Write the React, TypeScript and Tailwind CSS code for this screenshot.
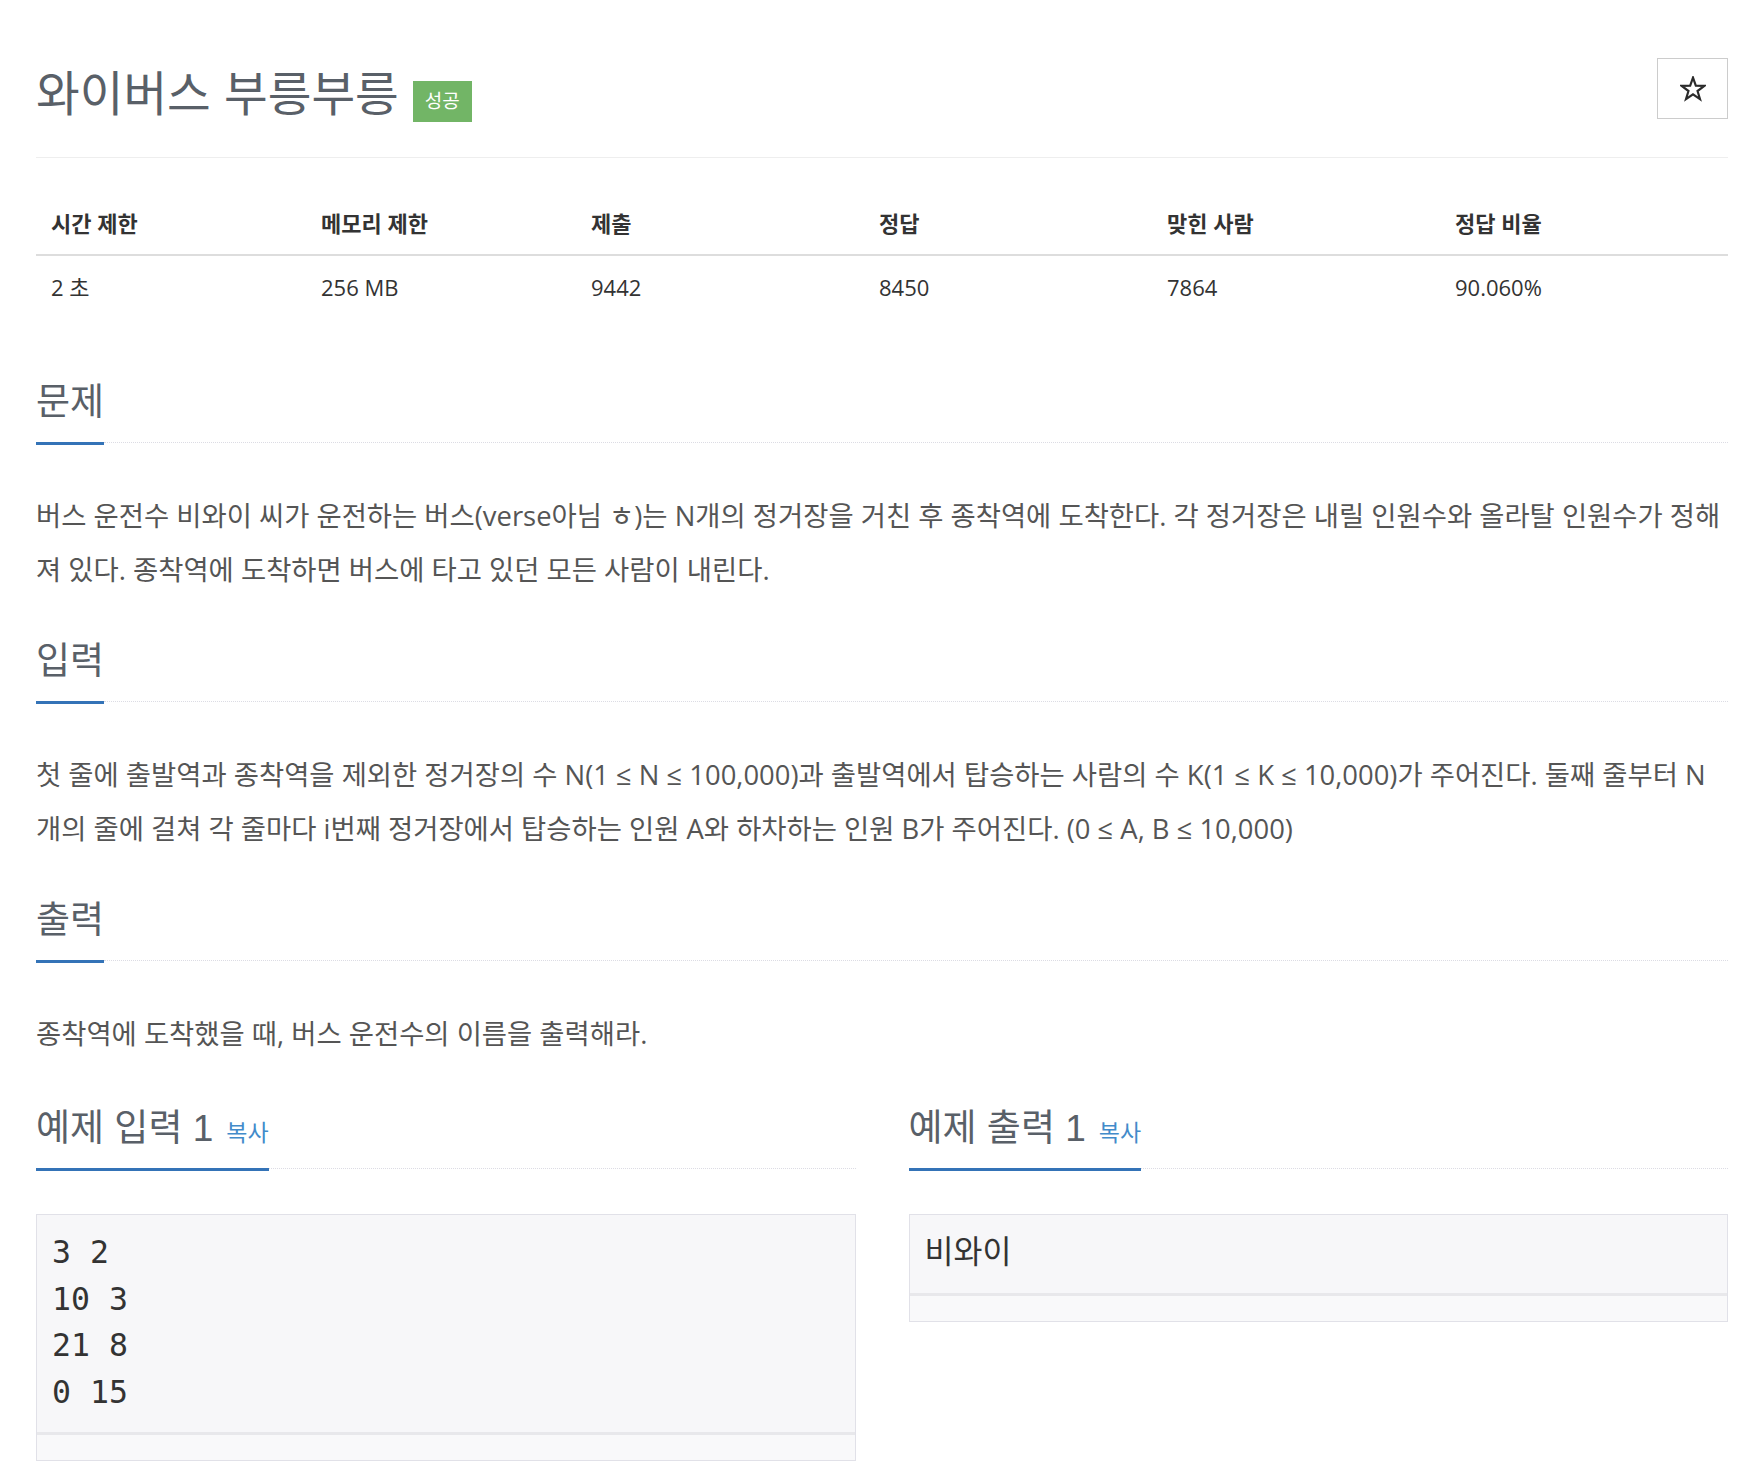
import React from "react";

const stats = [
  { label: "시간 제한", value: "2 초", w: "w-[270px]" },
  { label: "메모리 제한", value: "256 MB", w: "w-[270px]" },
  { label: "제출", value: "9442", w: "w-[288px]" },
  { label: "정답", value: "8450", w: "w-[288px]" },
  { label: "맞힌 사람", value: "7864", w: "w-[288px]" },
  { label: "정답 비율", value: "90.060%", w: "w-[288px]" },
];

const headFont = { fontFamily: '"Liberation Sans", "Noto Sans CJK KR", sans-serif' };
const bodyFont = { fontFamily: '"Open Sans", "Liberation Sans", "Noto Sans CJK KR", sans-serif' };
const monoFont = { fontFamily: '"DejaVu Sans Mono", "Noto Sans CJK KR", monospace' };

function Headline({ children }: { children: React.ReactNode }) {
  return (
    <div className="flex items-end">
      <h2
        className="h-[62px] text-[37px] leading-[40px] text-[#596068] border-b-[3px] border-[#3473b7] whitespace-nowrap"
        style={headFont}
      >
        {children}
      </h2>
      <div className="flex-1 border-b border-dotted border-[#dcdce4] mb-[2px]" />
    </div>
  );
}

function Section({ title, lines }: { title: string; lines: string[] }) {
  return (
    <section className="mt-[45px] first:mt-0">
      <Headline>{title}</Headline>
      <p className="mt-[44px] text-[27.4px] leading-[54px] text-[#555]" style={bodyFont}>
        {lines.map((l, i) => (
          <span key={i} className="block whitespace-nowrap">
            {l}
          </span>
        ))}
      </p>
    </section>
  );
}

function Copy() {
  return <span className="ml-[13px] text-[23px] leading-none text-[#428bca]">복사</span>;
}

function SampleBox({ text }: { text: string }) {
  return (
    <div className="mt-[43px] border border-[#e1e1e8] bg-[#f7f7f9]">
      <pre className="px-[15px] pt-[14px] pb-[17px] text-[31.5px] leading-[46.5px] text-[#333]" style={monoFont}>
        {text}
      </pre>
      <div className="h-[28px] border-t-[3px] border-[#e8e8eb] bg-[#f9f9fa]" />
    </div>
  );
}

export default function App() {
  return (
    <div className="min-h-screen bg-white pl-[36px] pr-[28px] pb-[20px]">
      {/* 제목 */}
      <div className="flex justify-between items-start pt-[58px] pb-[35px] border-b border-[#eeeeee]">
        <h1 className="flex items-start mt-[11px] text-[47.5px] leading-[52px] text-[#596068]" style={headFont}>
          와이버스 부릉부릉
          <span
            className="ml-[14px] mt-[12px] w-[59px] h-[41px] flex items-center justify-center bg-[#72b566] text-white text-[19px] leading-none"
            style={bodyFont}
          >
            성공
          </span>
        </h1>
        <button className="w-[71px] h-[61px] border border-[#cccccc] bg-white flex items-center justify-center">
          <svg width="26" height="26" viewBox="0 0 24 24" fill="none" stroke="#2b2b2b" strokeWidth="2" strokeLinejoin="miter">
            <polygon points="12,1.5 14.59,8.94 22.46,9.1 16.18,13.86 18.47,21.4 12,16.9 5.53,21.4 7.82,13.86 1.54,9.1 9.41,8.94" />
          </svg>
        </button>
      </div>

      {/* 통계 */}
      <div className="mt-[34px] text-[22px] leading-[30px] text-[#333]" style={bodyFont}>
        <div className="flex border-b-2 border-[#dddddd] pt-[16px] pb-[16px]">
          {stats.map((s) => (
            <div key={s.label} className={`${s.w} pl-[15px] font-bold`}>
              {s.label}
            </div>
          ))}
        </div>
        <div className="flex pt-[16px] pb-[16px]">
          {stats.map((s) => (
            <div key={s.label} className={`${s.w} pl-[15px]`}>
              {s.value}
            </div>
          ))}
        </div>
      </div>

      <div className="mt-[65px]">
        <Section
          title="문제"
          lines={[
            "버스 운전수 비와이 씨가 운전하는 버스(verse아님 ㅎ)는 N개의 정거장을 거친 후 종착역에 도착한다. 각 정거장은 내릴 인원수와 올라탈 인원수가 정해",
            "져 있다. 종착역에 도착하면 버스에 타고 있던 모든 사람이 내린다.",
          ]}
        />
        <Section
          title="입력"
          lines={[
            "첫 줄에 출발역과 종착역을 제외한 정거장의 수 N(1 ≤ N ≤ 100,000)과 출발역에서 탑승하는 사람의 수 K(1 ≤ K ≤ 10,000)가 주어진다. 둘째 줄부터 N",
            "개의 줄에 걸쳐 각 줄마다 i번째 정거장에서 탑승하는 인원 A와 하차하는 인원 B가 주어진다. (0 ≤ A, B ≤ 10,000)",
          ]}
        />
        <Section title="출력" lines={["종착역에 도착했을 때, 버스 운전수의 이름을 출력해라."]} />
      </div>

      {/* 예제 */}
      <div className="mt-[48px] grid grid-cols-2 gap-[53px]">
        <div>
          <Headline>
            예제 입력 1<Copy />
          </Headline>
          <SampleBox text={"3 2\n10 3\n21 8\n0 15"} />
        </div>
        <div>
          <Headline>
            예제 출력 1<Copy />
          </Headline>
          <SampleBox text="비와이" />
        </div>
      </div>
    </div>
  );
}
